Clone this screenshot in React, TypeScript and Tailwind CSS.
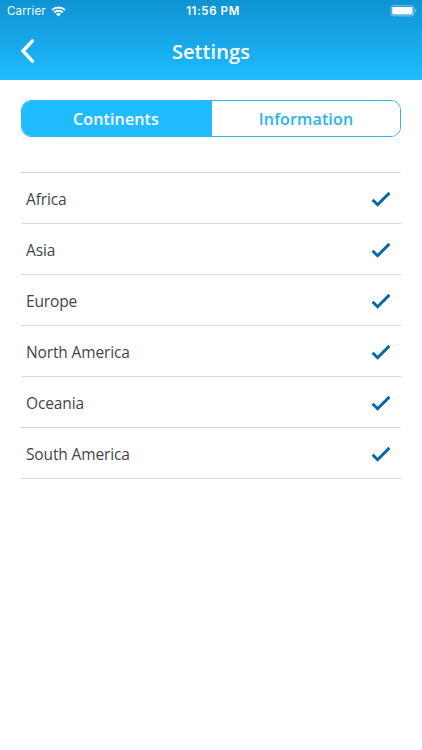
import React from 'react';

const continents = ['Africa', 'Asia', 'Europe', 'North America', 'Oceania', 'South America'];

const StatusBar: React.FC = () => (
  <div className="grid h-[22px] grid-cols-3 items-center pl-[7px] pr-[5px] font-['Inter',sans-serif] text-[11.5px] leading-[22px]">
    <div className="flex items-center gap-[5px]">
      <span className="tracking-[0.15px]">Carrier</span>
      <svg width="15" height="11" viewBox="0 0 15 11" fill="none" stroke="currentColor" strokeWidth="2">
        <path d="M1 4.1a9.2 9.2 0 0 1 13 0" />
        <path d="M3.3 6.5a6 6 0 0 1 8.4 0" />
        <path d="M7.5 10.6 5 8.1a3.6 3.6 0 0 1 5 0z" fill="currentColor" stroke="none" />
      </svg>
    </div>
    <span className="whitespace-nowrap pl-[2px] text-center font-semibold tracking-[0.6px]">11:56 PM</span>
    <svg className="justify-self-end" width="27" height="12" viewBox="0 0 27 12" fill="none">
      <rect x="0.9" y="0.7" width="23.2" height="10.2" rx="2.6" stroke="white" strokeOpacity="0.45" />
      <rect x="2.2" y="2" width="20.4" height="7.6" rx="1" fill="white" />
      <path d="M25.3 4c1.5.6 1.5 3 0 3.6z" fill="white" fillOpacity="0.5" />
    </svg>
  </div>
);

const App: React.FC = () => {
  return (
    <div className="min-h-[750px] w-full bg-white font-['Open_Sans',sans-serif]">
      <header className="h-20 bg-linear-to-b from-[#0e93d2] to-[#1fbcff] text-white">
        <StatusBar />
        <div className="grid h-[58px] grid-cols-[1fr_auto_1fr] items-center px-5">
          <button aria-label="Back" className="-mt-[2px] justify-self-start">
            <svg width="15" height="26" viewBox="0 0 15 26" fill="none" stroke="currentColor" strokeWidth="3.5" strokeLinecap="round" strokeLinejoin="miter">
              <path d="M12.4 2.9 3 13l9.4 10.1" />
            </svg>
          </button>
          <h1 className="pt-px text-[20px] font-semibold leading-[58px] tracking-[0.1px]">Settings</h1>
        </div>
      </header>

      <main className="px-[21px] pt-5">
        <div className="flex h-[37px] overflow-hidden rounded-[10px] border border-[#35b5ea] text-[16px] font-semibold tracking-[0.15px]">
          <button className="w-[190px] bg-[#1fbcff] pr-[2px] pt-px text-white">Continents</button>
          <button className="flex-1 bg-white pt-px text-[#26b5ee]">Information</button>
        </div>

        <ul className="mt-[35px] border-t border-[#d9d9d9]">
          {continents.map((name) => (
            <li key={name} className="flex h-[51px] items-center justify-between border-b border-[#d9d9d9] pl-[5px] pr-[10px] pt-0.5 text-[15.5px] tracking-[-0.13px] text-[#3f464b]">
              <span className="pt-px">{name}</span>
              <svg width="20" height="17" viewBox="0 0 20 17" fill="none" stroke="#0768a5" strokeWidth="2.9">
                <path d="M1.6 8.7 6.6 13.7 18.4 1.9" />
              </svg>
            </li>
          ))}
        </ul>
      </main>
    </div>
  );
};

export default App;
